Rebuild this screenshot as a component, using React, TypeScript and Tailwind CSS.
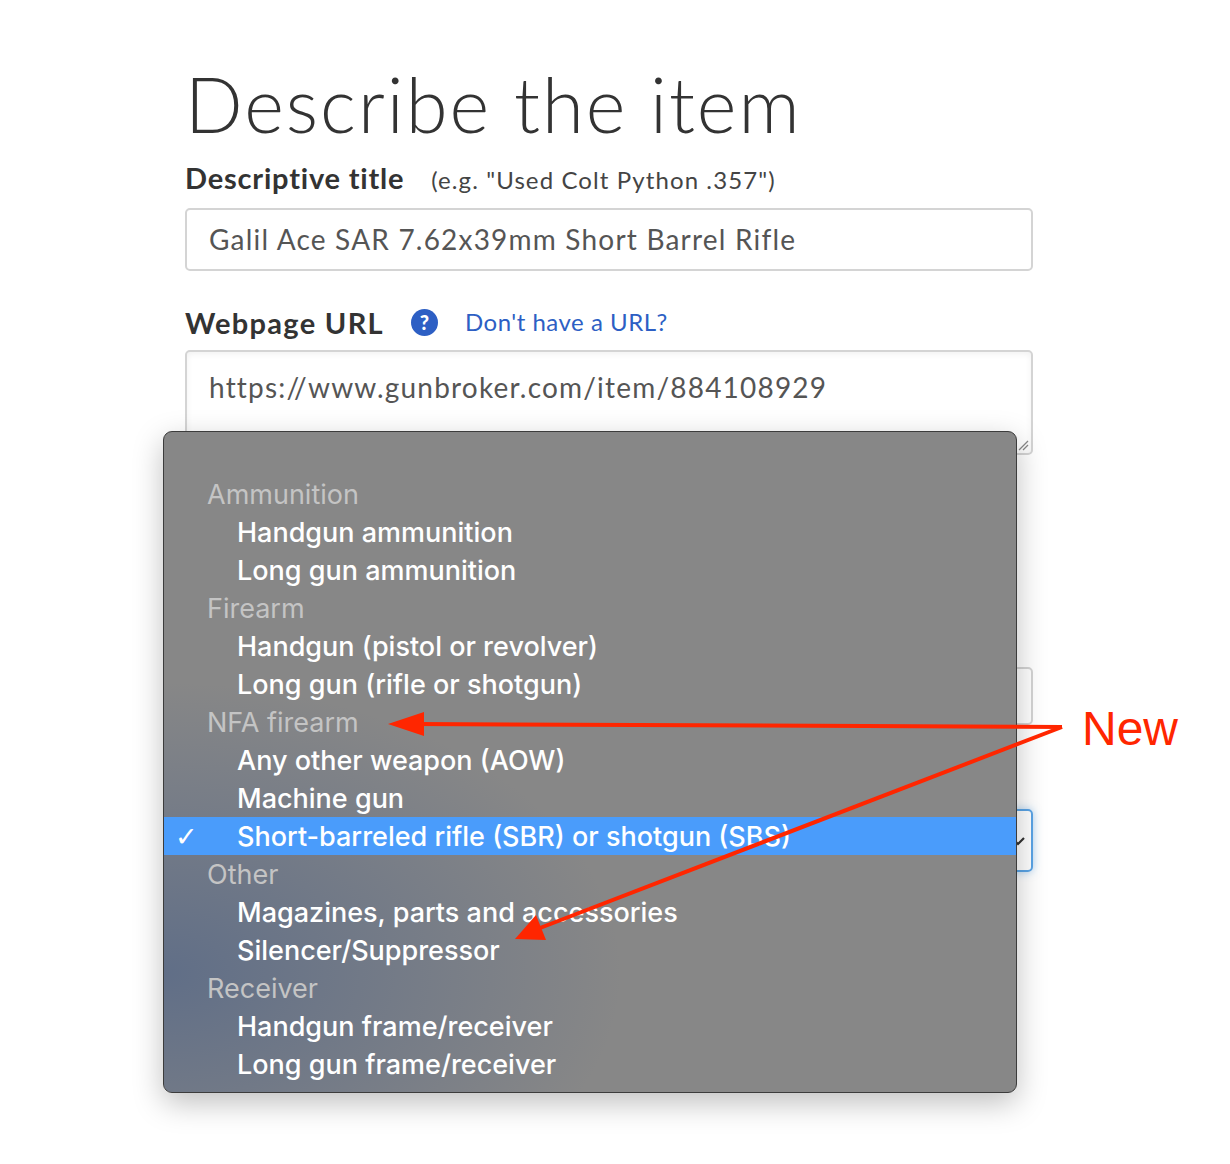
type Row = { label: string; group?: boolean; selected?: boolean };

const rows: Row[] = [
  { label: 'Ammunition', group: true },
  { label: 'Handgun ammunition' },
  { label: 'Long gun ammunition' },
  { label: 'Firearm', group: true },
  { label: 'Handgun (pistol or revolver)' },
  { label: 'Long gun (rifle or shotgun)' },
  { label: 'NFA firearm', group: true },
  { label: 'Any other weapon (AOW)' },
  { label: 'Machine gun' },
  { label: 'Short-barreled rifle (SBR) or shotgun (SBS)', selected: true },
  { label: 'Other', group: true },
  { label: 'Magazines, parts and accessories' },
  { label: 'Silencer/Suppressor' },
  { label: 'Receiver', group: true },
  { label: 'Handgun frame/receiver' },
  { label: 'Long gun frame/receiver' },
];

function Popup() {
  return (
    <div className="absolute left-[163px] top-[431px] w-[854px] h-[662px] rounded-[9px] border border-[#3c3c3c] bg-[#878787] shadow-[0_10px_30px_rgba(0,0,0,0.25)] overflow-hidden font-['Inter','Noto_Sans',sans-serif]">
      <div className="absolute inset-0 bg-[radial-gradient(ellipse_at_0%_82%,rgba(80,100,135,0.7),transparent_38%)]" />
      <div className="relative pt-[43px]">
        {rows.map((r) => (
          <div
            key={r.label}
            className={`h-[38px] flex items-center leading-none ${
              r.selected ? 'bg-[#4a9cfb] text-white' : r.group ? 'text-[#c4c4c4]' : 'text-white'
            }`}
          >
            <span className="w-[43px] pl-[11px] text-[27px] font-['DejaVu_Sans',sans-serif] font-light">
              {r.selected ? '✓' : ''}
            </span>
            <span className={r.group ? 'text-[27px] font-normal' : 'pl-[30px] text-[27px] font-medium'}>{r.label}</span>
          </div>
        ))}
      </div>
    </div>
  );
}

function Arrows() {
  return (
    <svg className="absolute inset-0 pointer-events-none" width="1230" height="1164" viewBox="0 0 1230 1164">
      <line x1="1062" y1="727" x2="415" y2="724" stroke="#ff2600" strokeWidth="4" />
      <polygon points="388,724 424,712 424,736" fill="#ff2600" />
      <line x1="1062" y1="727" x2="540" y2="928" stroke="#ff2600" strokeWidth="4" />
      <polygon points="515,939 536,915 546,940" fill="#ff2600" />
    </svg>
  );
}

export default function App() {
  return (
    <div className="relative w-[1230px] h-[1164px] bg-white overflow-hidden text-[#333] font-['Lato','Noto_Sans',sans-serif]">
      <div className="ml-[185px] w-[848px] pt-[60px]">
        <h1 className="text-[76px] font-light leading-[88px] tracking-[2px] text-[#333]">Describe the item</h1>

        <div className="mt-[8px] flex items-baseline gap-[27px]">
          <span className="text-[29px] font-bold tracking-[0.8px]">Descriptive title</span>
          <span className="text-[24px] tracking-[1.1px] text-[#444]">(e.g. "Used Colt Python .357")</span>
        </div>
        <div className="mt-[8px] h-[63px] rounded-[5px] border-2 border-[#d4d4d4] flex items-center px-[22px] text-[28px] tracking-[1.2px] text-[#555]">
          Galil Ace SAR 7.62x39mm Short Barrel Rifle
        </div>

        <div className="mt-[30px] flex items-center">
          <span className="text-[29px] font-bold tracking-[1.3px]">Webpage URL</span>
          <span className="ml-[27px] w-[27px] h-[27px] rounded-full bg-[#2d5fc4] text-white text-[20px] font-black leading-none flex items-center justify-center">
            ?
          </span>
          <span className="ml-[27px] text-[24px] tracking-[0.5px] text-[#2d5fc4]">Don't have a URL?</span>
        </div>
        <div className="relative mt-[6px] h-[105px] rounded-[5px] border-2 border-[#d4d4d4] shadow-[inset_0_2px_6px_rgba(0,0,0,0.06)] px-[22px] pt-[14px] text-[28px] tracking-[1.2px] text-[#555]">
          https://www.gunbroker.com/item/884108929
          <svg className="absolute right-[2px] bottom-[2px]" width="12" height="12" viewBox="0 0 12 12">
            <line x1="2" y1="11" x2="11" y2="2" stroke="#888" strokeWidth="1.2" />
            <line x1="6" y1="11" x2="11" y2="6" stroke="#888" strokeWidth="1.2" />
          </svg>
        </div>

        {/* fields hidden under the open select menu */}
        <div className="mt-[50px] h-[42px]" />
        <div className="mt-[120px] h-[58px] rounded-[5px] border-2 border-[#d4d4d4]" />
        <div className="mt-[34px] h-[42px]" />
        <div className="mt-[8px] h-[63px] rounded-[5px] border-2 border-[#5aa4e6] shadow-[0_0_8px_rgba(90,164,230,0.5)] flex items-center justify-end pr-[6px]">
          <svg width="14" height="10" viewBox="0 0 14 10">
            <polyline points="1,2 7,8 13,2" fill="none" stroke="#333" strokeWidth="2.2" />
          </svg>
        </div>
      </div>

      <Popup />
      <Arrows />

      <span className="absolute left-[1082px] top-[705px] text-[48px] leading-none text-[#ff2600] font-['Liberation_Sans','Arial',sans-serif]">
        New
      </span>
    </div>
  );
}
